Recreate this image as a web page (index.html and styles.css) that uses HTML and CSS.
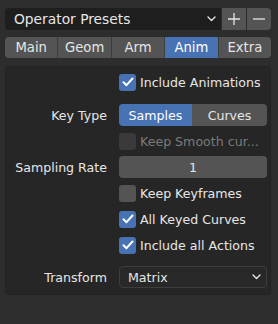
FILE: index.html
```html
<!DOCTYPE html>
<html>
<head>
<meta charset="utf-8">
<link rel="stylesheet" href="styles.css">
</head>
<body>
<div class="presets">
  <div class="preset-menu">
    <span>Operator Presets</span>
    <svg class="chev" width="9" height="6" viewBox="0 0 9 6"><path d="M1 1 L4.5 4.5 L8 1" fill="none" stroke="#e6e6e6" stroke-width="1.4" stroke-linecap="round" stroke-linejoin="round"/></svg>
  </div>
  <div class="pbtn">
    <svg width="14" height="14" viewBox="0 0 14 14"><path d="M7 1 V13 M1 7 H13" stroke="#e6e6e6" stroke-width="1.3"/></svg>
  </div>
  <div class="pbtn right">
    <svg width="14" height="14" viewBox="0 0 14 14"><path d="M1 7 H13" stroke="#e6e6e6" stroke-width="1.3"/></svg>
  </div>
</div>

<div class="tabs">
  <div class="tab">Main</div>
  <div class="tab">Geom</div>
  <div class="tab">Arm</div>
  <div class="tab active">Anim</div>
  <div class="tab">Extra</div>
</div>

<div class="panel">
  <div class="row first">
    <div class="label"></div>
    <div class="check"><span class="box on"><svg width="12" height="10" viewBox="0 0 12 10"><path d="M1.5 5.2 L4.5 8.2 L10.5 1.5" fill="none" stroke="#fff" stroke-width="2" stroke-linecap="round" stroke-linejoin="round"/></svg></span><span>Include Animations</span></div>
  </div>
  <div class="row keytype">
    <div class="label">Key Type</div>
    <div class="seg"><div class="segb active">Samples</div><div class="segb">Curves</div></div>
  </div>
  <div class="row">
    <div class="label"></div>
    <div class="check disabled"><span class="box"></span><span>Keep Smooth cur...</span></div>
  </div>
  <div class="row">
    <div class="label">Sampling Rate</div>
    <div class="num">1</div>
  </div>
  <div class="row">
    <div class="label"></div>
    <div class="check"><span class="box"></span><span>Keep Keyframes</span></div>
  </div>
  <div class="row">
    <div class="label"></div>
    <div class="check"><span class="box on"><svg width="12" height="10" viewBox="0 0 12 10"><path d="M1.5 5.2 L4.5 8.2 L10.5 1.5" fill="none" stroke="#fff" stroke-width="2" stroke-linecap="round" stroke-linejoin="round"/></svg></span><span>All Keyed Curves</span></div>
  </div>
  <div class="row">
    <div class="label"></div>
    <div class="check"><span class="box on"><svg width="12" height="10" viewBox="0 0 12 10"><path d="M1.5 5.2 L4.5 8.2 L10.5 1.5" fill="none" stroke="#fff" stroke-width="2" stroke-linecap="round" stroke-linejoin="round"/></svg></span><span>Include all Actions</span></div>
  </div>
  <div class="row transform">
    <div class="label">Transform</div>
    <div class="menu"><span>Matrix</span><svg class="chev" width="9" height="6" viewBox="0 0 9 6"><path d="M1 1 L4.5 4.5 L8 1" fill="none" stroke="#e6e6e6" stroke-width="1.4" stroke-linecap="round" stroke-linejoin="round"/></svg></div>
  </div>
</div>
</body>
</html>
```

FILE: styles.css
```css
* { box-sizing: border-box; }
html, body { margin: 0; }
body {
  width: 278px;
  height: 324px;
  background: #2d2d2d;
  padding: 8px 7px 0 5px;
  font-family: "DejaVu Sans", sans-serif;
  font-size: 12.6px;
  color: #e6e6e6;
  overflow: hidden;
}
.presets {
  display: flex;
  gap: 1px;
  height: 22px;
}
.preset-menu {
  flex: 1;
  background: #1e1e1e;
  border-radius: 4px 0 0 4px;
  display: flex;
  align-items: center;
  justify-content: space-between;
  padding: 0 5px 0 9px;
}
.preset-menu span { font-size: 13.8px; }
.pbtn {
  width: 24px;
  background: #545454;
  display: flex;
  align-items: center;
  justify-content: center;
}
.pbtn.right { border-radius: 0 4px 4px 0; }
.tabs {
  display: flex;
  margin-top: 7px;
  height: 21px;
  border-radius: 4px;
  overflow: hidden;
  gap: 1px;
  background: #3d3d3d;
}
.tab {
  flex: 1;
  background: #545454;
  display: flex;
  align-items: center;
  justify-content: center;
  font-size: 13.2px;
}
.tab.active { background: #4772b3; color: #fff; }
.panel {
  margin-top: 8px;
  background: #262626;
  border: 1px solid #232323;
  border-radius: 4px;
  padding: 4px 4px 6px 0;
  display: flex;
  flex-direction: column;
  gap: 4px;
}
.row {
  display: grid;
  grid-template-columns: 101px 148px;
  column-gap: 12px;
  height: 22px;
  align-items: center;
}
.row.keytype { margin-top: 7px; }
.row.transform { margin-top: 6px; }
.label { text-align: right; }
.check {
  display: flex;
  align-items: center;
  gap: 4px;
  white-space: nowrap;
}
.box {
  width: 17px;
  height: 17px;
  border-radius: 3px;
  background: #545454;
  display: flex;
  align-items: center;
  justify-content: center;
  flex: none;
}
.box.on { background: #4772b3; }
.check.disabled { color: #7a7a7a; }
.check.disabled .box { background: #3a3a3a; }
.seg {
  display: flex;
  height: 22px;
  border-radius: 4px;
  overflow: hidden;
}
.segb {
  flex: 1;
  background: #545454;
  display: flex;
  align-items: center;
  justify-content: center;
}
.segb.active { flex: 0 0 73px; background: #4772b3; color: #fff; }
.num {
  height: 22px;
  background: #545454;
  border-radius: 4px;
  display: flex;
  align-items: center;
  justify-content: center;
}
.menu {
  height: 22px;
  background: #282828;
  border: 1px solid #3d3d3d;
  border-radius: 4px;
  display: flex;
  align-items: center;
  justify-content: space-between;
  padding: 0 5px 0 8px;
}
```
